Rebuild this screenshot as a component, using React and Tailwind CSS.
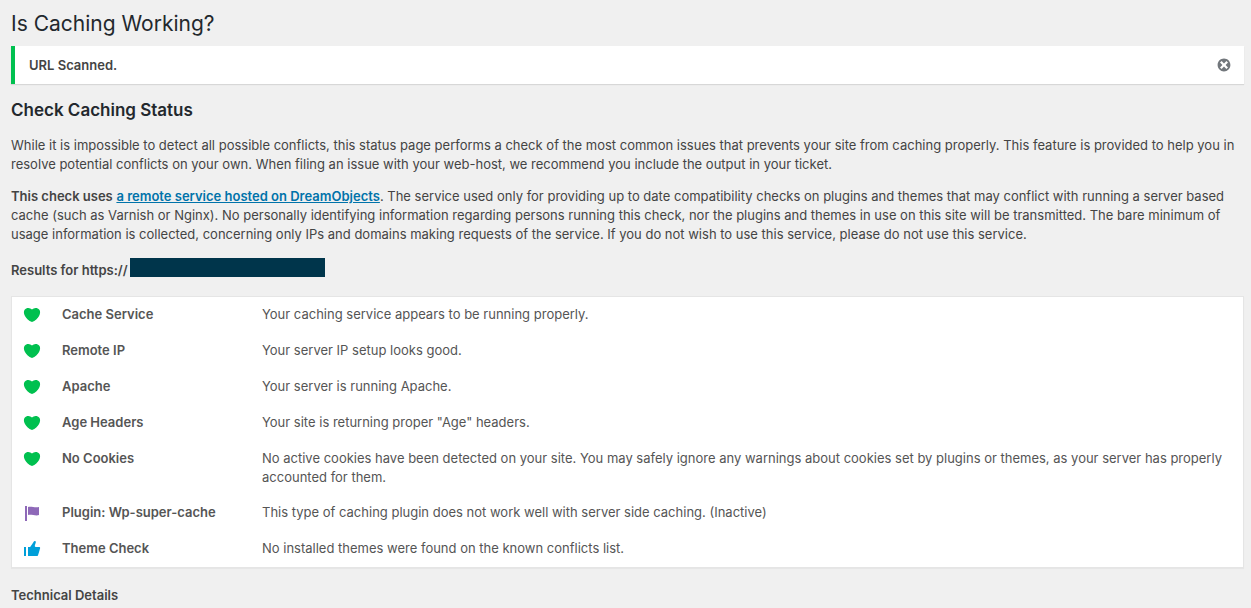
const HEART =
  "M10 17.12c3.33-1.4 5.74-3.79 7.04-6.21 1.28-2.41 1.46-4.81.32-6.25-1.03-1.29-2.37-1.78-3.73-1.74s-2.68.63-3.63 1.46c-.95-.83-2.27-1.42-3.63-1.46s-2.7.45-3.73 1.74c-1.14 1.44-.96 3.84.34 6.25 1.28 2.42 3.69 4.81 7.02 6.21z";
const FLAG = "M5 18V3H3v15h2zm1-6V4c3-1 7 1 11 0v8c-3 1.27-8-1-11 0z";
const THUMB =
  "M12.72 2c.15-.02.26.02.41.07.56.19.83.79.66 1.35-.17.55-1 3.04-1 3.58 0 .53.75 1 1.35 1h3c.6 0 1 .4 1 1s-2 7-2 7c-.17.39-.55 1-1 1H6V8h2.14c.41-.41 3.3-4.71 3.58-5.27.21-.41.6-.68 1-.73zM2 8h2v9H2V8z";
const DISMISS =
  "M10 2c4.42 0 8 3.58 8 8s-3.58 8-8 8-8-3.58-8-8 3.58-8 8-8zm5 11l-3-3 3-3-2-2-3 3-3-3-2 2 3 3-3 3 2 2 3-3 3 3z";

const ICONS = {
  good: { path: HEART, className: "block size-5 fill-[#00c04f]" },
  notice: { path: FLAG, className: "block size-5 fill-[#8e69b8]" },
  awesome: { path: THUMB, className: "block size-5 fill-[#009fd9]" },
};

const RESULTS = [
  { status: "good", name: "Cache Service", message: "Your caching service appears to be running properly." },
  { status: "good", name: "Remote IP", message: "Your server IP setup looks good." },
  { status: "good", name: "Apache", message: "Your server is running Apache." },
  { status: "good", name: "Age Headers", message: 'Your site is returning proper "Age" headers.' },
  {
    status: "good",
    name: "No Cookies",
    message:
      "No active cookies have been detected on your site. You may safely ignore any warnings about cookies set by plugins or themes, as your server has properly accounted for them.",
  },
  {
    status: "notice",
    name: "Plugin: Wp-super-cache",
    message: "This type of caching plugin does not work well with server side caching. (Inactive)",
  },
  { status: "awesome", name: "Theme Check", message: "No installed themes were found on the known conflicts list." },
];

function StatusIcon({ status }) {
  const icon = ICONS[status];
  return (
    <svg viewBox="0 0 20 20" className={icon.className} aria-hidden="true">
      <path d={icon.path} />
    </svg>
  );
}

export default function App() {
  return (
    <main className="min-h-screen bg-[#f0f0f0] pt-[9px] pr-[7px] pl-[11px] font-['Inter','Liberation_Sans',sans-serif] text-[13px] leading-[19px] text-[#444]">
      <h1 className="text-[21px] leading-[30px] font-normal text-[#23282d]">Is Caching Working?</h1>

      <div className="mt-[7px] flex items-center justify-between border-l-4 border-[#00c04f] bg-white py-[9px] pr-3 pl-[14px] shadow-[0_1px_1px_0_rgba(0,0,0,0.1)]">
        <p className="leading-5 font-semibold">URL Scanned.</p>
        <button type="button" aria-label="Dismiss this notice" className="flex size-4 items-center justify-center">
          <svg viewBox="0 0 20 20" className="size-4 fill-[#72777c]" aria-hidden="true">
            <path d={DISMISS} />
          </svg>
        </button>
      </div>

      <h2 className="mt-4 text-[17px] leading-5 font-semibold text-[#23282d]">Check Caching Status</h2>

      <p className="mt-4">
        While it is impossible to detect all possible conflicts, this status page performs a check of the most common
        issues that prevents your site from caching properly. This feature is provided to help you in resolve potential
        conflicts on your own. When filing an issue with your web-host, we recommend you include the output in your
        ticket.
      </p>

      <p className="mt-[13px]">
        <strong className="font-semibold">This check uses</strong>{" "}
        <a href="#service" className="font-semibold text-[#0073aa] underline">
          a remote service hosted on DreamObjects
        </a>
        . The service used only for providing up to date compatibility checks on plugins and themes that may conflict
        with running a server based cache (such as Varnish or Nginx). No personally identifying information regarding
        persons running this check, nor the plugins and themes in use on this site will be transmitted. The bare minimum
        of usage information is collected, concerning only IPs and domains making requests of the service. If you do not
        wish to use this service, please do not use this service.
      </p>

      <div className="mt-[14px] flex items-start gap-[2px]">
        <h3 className="mt-[2px] leading-5 font-semibold">Results for https://</h3>
        <span className="h-[19px] w-[195px] bg-[#00354b]" />
      </div>

      <table className="mt-4 w-full border-separate border-spacing-0 border border-[#e5e5e5] bg-white text-left text-[#555] shadow-[0_1px_1px_rgba(0,0,0,0.04)]">
        <tbody>
          {RESULTS.map((row) => (
            <tr key={row.name} className="align-top">
              <td className="w-10 py-2 pl-[10px]">
                <StatusIcon status={row.status} />
              </td>
              <th scope="row" className="w-[200px] py-2 pl-[10px] font-semibold">
                {row.name}
              </th>
              <td className="py-2 pr-[10px] pl-[10px]">{row.message}</td>
            </tr>
          ))}
        </tbody>
      </table>

      <h3 className="mt-[17px] pb-1 leading-5 font-semibold">Technical Details</h3>
    </main>
  );
}
